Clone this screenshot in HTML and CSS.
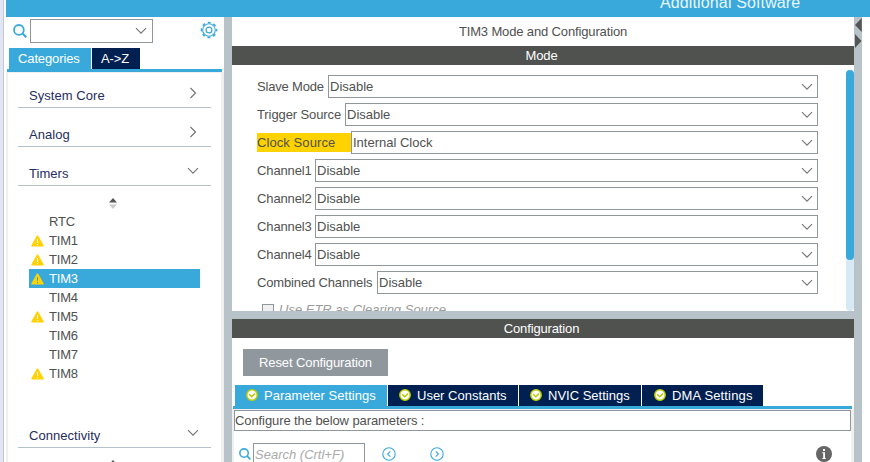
FILE: index.html
```html
<!DOCTYPE html>
<html lang="en">
<head>
<meta charset="utf-8">
<title>TIM3 Mode and Configuration</title>
<link rel="stylesheet" href="styles.css">
</head>
<body>
<svg class="defs" aria-hidden="true">
  <symbol id="down" viewBox="0 0 12 8"><path d="M1 1.2 6 6.2 11 1.2" fill="none" stroke="#777" stroke-width="1.2"/></symbol>
  <symbol id="right" viewBox="0 0 8 12"><path d="M1.5 1 6.5 6 1.5 11" fill="none" stroke="#777" stroke-width="1.2"/></symbol>
  <symbol id="search" viewBox="0 0 14 14"><circle cx="5.9" cy="5.9" r="4.9" fill="none" stroke="#39a9dc" stroke-width="1.8"/><path d="m9.3 9.3 4 4" stroke="#39a9dc" stroke-width="2.1"/></symbol>
  <symbol id="warn" viewBox="0 0 13 12"><path d="M6.5 1.2 12 10.8H1Z" fill="#ffd200" stroke="#ffd200" stroke-width="1.6" stroke-linejoin="round"/><path d="M6.5 4v4M6.5 9v1.2" stroke="currentColor" stroke-width="1"/></symbol>
  <symbol id="check" viewBox="0 0 12 12"><circle cx="6" cy="6" r="5.2" fill="#fff" stroke="#bccf00" stroke-width="1.5"/><path d="m3.2 5.2 2.6 2.6 3.3-3.3" fill="none" stroke="#b4c800" stroke-width="1.5"/></symbol>
  <symbol id="sort" viewBox="0 0 8 11"><path d="M4 0 8 4.6H0Z" fill="#555"/><path d="M0 6.4h8L4 11Z" fill="#ccc"/></symbol>
</svg>
<div class="app">
  <div class="edge"></div>
  <div class="window">
    <header class="topbar"><span>Additional Software</span></header>
    <div class="workspace">
      <aside class="sidebar">
        <div class="finder">
          <svg class="find-icon"><use href="#search"/></svg>
          <div class="find-box"><svg class="down"><use href="#down"/></svg></div>
          <svg class="gear" viewBox="0 0 18 18"><circle cx="9" cy="9" r="7.5" fill="none" stroke="#39a9dc" stroke-width="1.6" stroke-dasharray="2.9 2.99" stroke-dashoffset="1.45"/><circle cx="9" cy="9" r="6.3" fill="none" stroke="#39a9dc" stroke-width="1.1"/><circle cx="9" cy="9" r="2.9" fill="none" stroke="#39a9dc" stroke-width="1.2"/></svg>
        </div>
        <nav class="side-tabs"><span class="side-tab active">Categories</span><span class="side-tab az">A-&gt;Z</span></nav>
        <div class="side-body">
          <div class="category"><span>System Core</span><svg class="right"><use href="#right"/></svg></div>
          <div class="category"><span>Analog</span><svg class="right"><use href="#right"/></svg></div>
          <div class="category"><span>Timers</span><svg class="down"><use href="#down"/></svg></div>
          <svg class="sort"><use href="#sort"/></svg>
          <ul class="timers">
            <li><i></i>RTC</li>
            <li><svg><use href="#warn"/></svg>TIM1</li>
            <li><svg><use href="#warn"/></svg>TIM2</li>
            <li class="selected"><svg><use href="#warn"/></svg>TIM3</li>
            <li><i></i>TIM4</li>
            <li><svg><use href="#warn"/></svg>TIM5</li>
            <li><i></i>TIM6</li>
            <li><i></i>TIM7</li>
            <li><svg><use href="#warn"/></svg>TIM8</li>
          </ul>
          <div class="category"><span>Connectivity</span><svg class="down"><use href="#down"/></svg></div>
          <svg class="sort"><use href="#sort"/></svg>
        </div>
      </aside>
      <div class="divider"></div>
      <main class="main">
        <h1 class="title">TIM3 Mode and Configuration</h1>
        <h2 class="band">Mode</h2>
        <section class="mode">
          <div class="fields">
            <div class="field"><label class="slave">Slave Mode</label><div class="select">Disable<svg class="down"><use href="#down"/></svg></div></div>
            <div class="field"><label class="trigger">Trigger Source</label><div class="select">Disable<svg class="down"><use href="#down"/></svg></div></div>
            <div class="field"><label class="clock">Clock Source</label><div class="select">Internal Clock<svg class="down"><use href="#down"/></svg></div></div>
            <div class="field"><label class="channel">Channel1</label><div class="select">Disable<svg class="down"><use href="#down"/></svg></div></div>
            <div class="field"><label class="channel">Channel2</label><div class="select">Disable<svg class="down"><use href="#down"/></svg></div></div>
            <div class="field"><label class="channel">Channel3</label><div class="select">Disable<svg class="down"><use href="#down"/></svg></div></div>
            <div class="field"><label class="channel">Channel4</label><div class="select">Disable<svg class="down"><use href="#down"/></svg></div></div>
            <div class="field"><label class="combined">Combined Channels</label><div class="select">Disable<svg class="down"><use href="#down"/></svg></div></div>
            <div class="option"><span class="box"></span>Use ETR as Clearing Source</div>
          </div>
          <div class="track"><div class="thumb"></div></div>
        </section>
        <div class="splitter"></div>
        <h2 class="band">Configuration</h2>
        <section class="config">
          <button class="reset">Reset Configuration</button>
          <nav class="tabs">
            <span class="tab active parameter"><svg><use href="#check"/></svg>Parameter Settings</span>
            <span class="tab user"><svg><use href="#check"/></svg>User Constants</span>
            <span class="tab nvic"><svg><use href="#check"/></svg>NVIC Settings</span>
            <span class="tab dma"><svg><use href="#check"/></svg>DMA Settings</span>
          </nav>
          <div class="tab-body">
            <p class="hint">Configure the below parameters :</p>
            <div class="tools">
              <svg class="small-search"><use href="#search"/></svg>
              <div class="query">Search (Crtl+F)</div>
              <svg class="arrow" viewBox="0 0 14 14"><circle cx="7" cy="7" r="6.2"/><path d="M8.3 4.3 5.6 7l2.7 2.7"/></svg>
              <svg class="arrow next" viewBox="0 0 14 14"><circle cx="7" cy="7" r="6.2"/><path d="M5.7 4.3 8.4 7 5.7 9.7"/></svg>
              <svg class="info" viewBox="0 0 16 16"><circle cx="8" cy="8" r="8" fill="#666"/><path d="M7 3h2v2H7zM6.3 6.3H9V12h.8v1H6.4v-1h.8V7.3h-.9z" fill="#fff"/></svg>
            </div>
          </div>
        </section>
      </main>
      <div class="divider grips"><svg viewBox="0 0 8 32"><path d="M7.8 1v14L1 8Z M1 17v14l6.5-7Z" fill="#555"/></svg></div>
    </div>
  </div>
</div>
</body>
</html>
```
FILE: styles.css
```css
* { box-sizing: border-box; }
body { margin: 0; overflow: hidden; background: #fff; color: #505150; font: 13px/19px "Liberation Sans", Arial, sans-serif; }
svg { display: block; flex: none; }
.defs { display: none; }
.app { display: flex; width: 870px; height: 462px; overflow: hidden; }
.edge { width: 6px; background: #fff; border-left: 3px solid #e0e6f5; box-shadow: inset 1px 0 #cac5d1; }
.window { flex: 1; display: flex; flex-direction: column; min-width: 0; }
.topbar { height: 17px; flex: none; background: #39a9dc; color: #e8f6fc; font-size: 16px; line-height: 18px; letter-spacing: .13px; overflow: hidden; padding-left: 654px; }
.topbar span { display: block; margin-top: -6px; }
.workspace { display: flex; height: 445px; }
.down { width: 12px; height: 8px; }
.right { width: 8px; height: 12px; }

.sidebar { width: 218px; flex: none; }
.finder { display: flex; height: 31px; padding: 2px 6px 0 7px; }
.find-icon { width: 14px; height: 14px; margin-top: 5px; }
.find-box { width: 123px; height: 24px; margin-left: 3px; border: 1px solid #8f979c; display: flex; align-items: center; justify-content: flex-end; padding-right: 5px; }
.gear { width: 18px; height: 18px; margin: 2px 0 0 47px; }
.side-tabs { display: flex; gap: 1px; height: 24px; margin: 0 2px 0 1px; padding-left: 2px; border-bottom: 3px solid #39a9dc; }
.side-tab { height: 21px; line-height: 21px; width: 82px; padding-left: 9px; background: #39a9dc; color: #fff; letter-spacing: -.12px; }
.side-tab.az { width: 48px; background: #002052; }
.side-body { height: 390px; border: solid #f0f0f0; border-width: 1px 3px 0 2px; padding: 0 10px; overflow: hidden; }
.category { height: 39px; display: flex; justify-content: space-between; align-items: flex-end; padding: 0 12px 2px 11px; border-bottom: 1px solid #b6c2c9; color: #1f2d60; letter-spacing: .05px; }
.category:first-child { height: 35px; }
.category .right { margin: 0 2px 6px 0; }
.category .down { margin-bottom: 8px; }
.sort { width: 8px; height: 11px; margin: 12px 0 3px 91px; }
.timers { list-style: none; margin: 0 11px 26px; padding: 0; letter-spacing: -.2px; }
.timers li { display: flex; align-items: center; height: 19px; gap: 5px; padding-left: 2px; color: #505150; }
.timers li svg, .timers li i { width: 13px; height: 12px; color: #fff; }
.timers .selected { background: #39a9dc; color: #fff; }
.timers .selected svg { color: #39a9dc; }

.divider { width: 8px; flex: none; background: #b8c3c9; }
.grips svg { width: 8px; height: 32px; }
.main { width: 622px; flex: none; }
.title, .band { margin: 0; font-size: 13px; font-weight: normal; text-align: center; letter-spacing: -.14px; }
.title { height: 29px; line-height: 29px; }
.band { height: 19px; line-height: 19px; background: #505250; color: #fff; padding-right: 3px; }
.mode { height: 246px; display: flex; justify-content: space-between; padding: 5px 0 0 25px; overflow: hidden; }
.fields { width: 561px; padding-top: 5px; display: flex; flex-direction: column; gap: 5px; }
.field { display: flex; height: 23px; flex: none; align-items: center; }
.field label { flex: none; white-space: nowrap; height: 19px; }
.field .slave { width: 71px; letter-spacing: -.18px; }
.field .trigger { width: 88px; letter-spacing: -.1px; }
.field .clock { width: 94px; background: #ffd200; letter-spacing: .08px; }
.field .channel { width: 58px; letter-spacing: -.12px; }
.field .combined { width: 120px; letter-spacing: -.15px; }
.select { flex: 1; height: 23px; border: 1px solid #8f979c; padding: 0 4px 0 1px; display: flex; align-items: center; justify-content: space-between; }
.option { display: flex; gap: 5px; padding: 1px 0 0 5px; flex: none; font-style: italic; color: #9b9b9b; }
.box { width: 12px; height: 12px; margin-top: 4px; border: 1px solid #8f979c; background: #f0f0f0; }
.track { width: 8px; height: 241px; border-radius: 4px; background: #d8e9f6; }
.thumb { height: 190px; border-radius: 4px; background: #39a9dc; }
.splitter { height: 8px; background: #b8c3c9; }
.config { padding-top: 11px; }
.reset { display: block; width: 145px; height: 27px; margin: 0 0 9px 11px; padding: 0; border: 0; background: #90989e; color: #fff; font: inherit; letter-spacing: -.1px; }
.tabs { display: flex; gap: 1px; height: 24px; margin: 0 2px 0 1px; padding-left: 2px; border-bottom: 3px solid #39a9dc; }
.tab { display: flex; align-items: center; gap: 6px; height: 21px; padding-left: 11px; background: #002052; color: #fff; white-space: nowrap; }
.tab svg { width: 12px; height: 12px; margin-bottom: 1px; }
.tab.active { background: #39a9dc; }
.parameter { width: 152px; letter-spacing: .03px; }
.user { width: 130px; }
.nvic { width: 122px; }
.dma { width: 121px; padding-left: 12px; letter-spacing: .15px; }
.tab-body { height: 53px; border: solid #f0f0f0; border-width: 1px 3px 0 2px; overflow: hidden; }
.hint { height: 21px; margin: 0; border: 1px solid #8f979c; letter-spacing: -.09px; }
.tools { display: flex; padding: 12px 19px 0 5px; }
.small-search { width: 12px; height: 12px; margin-top: 5px; }
.query { width: 112px; height: 23px; margin-left: 2px; border: 1px solid #8f979c; padding: 1px; line-height: 20px; font-style: italic; color: #aaa; }
.arrow { width: 14px; height: 14px; margin: 4px 0 0 17px; fill: none; stroke: #39a9dc; stroke-width: 1.1; }
.next { margin-left: 34px; }
.info { width: 16px; height: 16px; margin: 3px 0 0 auto; }
```
